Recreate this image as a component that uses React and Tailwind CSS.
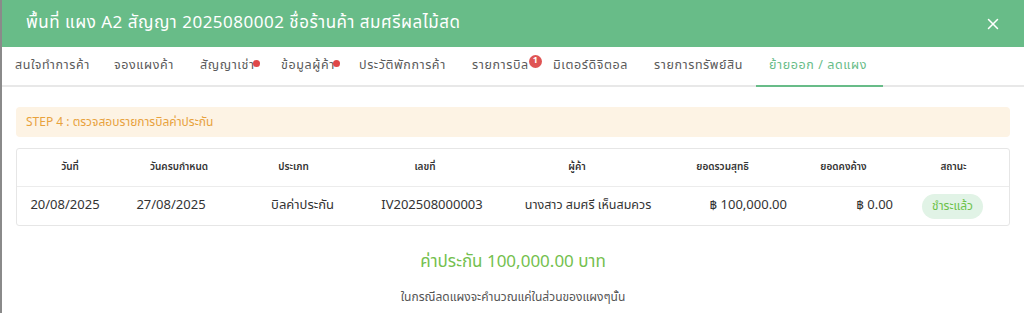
import { X } from "lucide-react";

const tabs = [
  { label: "สนใจทำการค้า", w: "w-[99px]" },
  { label: "จองแผงค้า", w: "w-[86px]" },
  { label: "สัญญาเช่า", w: "w-[81px]", dot: true },
  { label: "ข้อมูลผู้ค้า", w: "w-[78px]", dot: true },
  { label: "ประวัติพักการค้า", w: "w-[113px]" },
  { label: "รายการบิล", w: "w-[81px]", badge: "1" },
  { label: "มิเตอร์ดิจิตอล", w: "w-[101px]" },
  { label: "รายการทรัพย์สิน", w: "w-[115px]" },
  { label: "ย้ายออก / ลดแผง", w: "w-[127px]", active: true },
];

const cols = [
  { head: "วันที่", w: "w-[106px]", cell: "20/08/2025", cls: "text-center pr-[10px]" },
  { head: "วันครบกำหนด", w: "w-[112px]", cell: "27/08/2025", cls: "text-center pr-[16px]" },
  { head: "ประเภท", w: "w-[117px]", cell: "บิลค่าประกัน", cls: "text-center pl-[18px]" },
  { head: "เลขที่", w: "w-[146px]", cell: "IV202508000003", cls: "text-center pl-[14px]" },
  { head: "ผู้ค้า", w: "w-[158px]", cell: "นางสาว สมศรี เห็นสมควร", cls: "text-center pl-[22px] text-[12.5px]" },
  { head: "ยอดรวมสุทธิ", w: "w-[133px]", cell: "฿ 100,000.00", cls: "text-right pr-[2px]" },
  { head: "ยอดคงค้าง", w: "w-[109px]", cell: "฿ 0.00", cls: "text-right pr-[5px]" },
];

export default function App() {
  return (
    <div className="flex w-[1024px] h-[313px] overflow-hidden bg-[#8a8a8a] font-['Noto_Sans_Thai','Noto_Sans',sans-serif]">
      <div className="w-[2px] shrink-0" />
      <div className="flex-1 flex flex-col bg-white">
        {/* header */}
        <div className="h-[47px] shrink-0 bg-[#68bc88] flex items-center justify-between pl-[24px] pr-[22px]">
          <h1 className="text-[17px] tracking-[0.5px] text-white whitespace-nowrap">
            พื้นที่ แผง A2 สัญญา 2025080002 ชื่อร้านค้า สมศรีผลไม้สด
          </h1>
          <X size={18} strokeWidth={2} className="text-white" />
        </div>

        {/* tabs */}
        <div className="h-[40px] shrink-0 flex items-stretch border-b-2 border-[#e8e8e8]">
          {tabs.map((t) => (
            <div
              key={t.label}
              className={
                "shrink-0 flex items-center pl-[13px] text-[12.5px] tracking-[0.6px] whitespace-nowrap " +
                t.w +
                (t.active ? " text-[#68bc88] border-b-2 border-[#68bc88] -mb-[2px]" : " text-[#5a5a5a]")
              }
            >
              <span className="relative">
                {t.label}
                {t.dot && (
                  <span className="absolute -right-[5px] top-[3px] w-[7px] h-[7px] rounded-full bg-[#e04848]" />
                )}
                {t.badge && (
                  <span className="absolute -right-[13px] -top-[2px] w-[13px] h-[13px] rounded-full bg-[#df5454] text-white text-[9px] font-bold tracking-normal flex items-center justify-center">
                    {t.badge}
                  </span>
                )}
              </span>
            </div>
          ))}
        </div>

        {/* body */}
        <div className="px-[14px] pt-[20px]">
          <div className="h-[30px] rounded-[4px] bg-[#fdf3e4] flex items-center pl-[10px] text-[12px] text-[#e8a23d]">
            STEP 4 : ตรวจสอบรายการบิลค่าประกัน
          </div>

          <div className="mt-[11px] w-[994px] border border-[#e6e6e6] rounded-[3px]">
            <div className="flex h-[38px] border-b border-[#ececec] text-[10px] font-semibold text-[#333]">
              {cols.map((c) => (
                <div key={c.head} className={c.w + " flex items-center justify-center"}>
                  {c.head}
                </div>
              ))}
              <div className="w-[111px] flex items-center justify-center">สถานะ</div>
            </div>
            <div className="flex h-[38px] text-[13px] text-[#333] whitespace-nowrap">
              {cols.map((c) => (
                <div key={c.head} className={c.w + " flex items-center"}>
                  <span className={"w-full " + c.cls}>{c.cell}</span>
                </div>
              ))}
              <div className="w-[111px] flex items-center justify-center pr-[2px]">
                <span className="h-[25px] px-[10px] rounded-full bg-[#e1f3e6] text-[#6cc24a] text-[12px] flex items-center">
                  ชำระแล้ว
                </span>
              </div>
            </div>
          </div>

          <div className="mt-[24px] text-center text-[17px] text-[#74bf4e]">
            ค่าประกัน 100,000.00 บาท
          </div>
          <div className="mt-[12px] text-center text-[12px] text-[#555]">
            ในกรณีลดแผงจะคำนวณแค่ในส่วนของแผงๆนั้น
          </div>
        </div>
      </div>
    </div>
  );
}
